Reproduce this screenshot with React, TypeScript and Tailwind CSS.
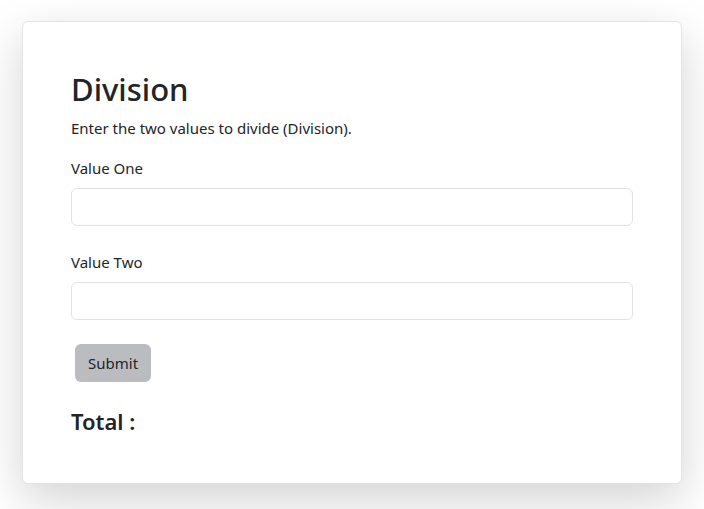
import React from "react";

export default function App() {
  return (
    <div className="min-h-[509px] bg-white pt-[21px] px-[22px]" style={{ fontFamily: '"Noto Sans", "Open Sans", sans-serif' }}>
      <div className="rounded-[6px] border border-[#e3e3e3] bg-white p-12 text-[#212529] shadow-[0_16px_48px_rgba(0,0,0,0.175)]">
        <h1 className="mb-2 text-[31px] font-medium leading-[38px]">Division</h1>
        <p className="mb-4 text-[15px] leading-6">Enter the two values to divide (Division).</p>
        <label className="mb-2 block text-[15px] leading-6">Value One</label>
        <input className="mb-6 block h-[38px] w-full rounded-[6px] border border-[#dee2e6] px-3 outline-none" />
        <label className="mb-2 block text-[15px] leading-6">Value Two</label>
        <input className="mb-6 block h-[38px] w-full rounded-[6px] border border-[#dee2e6] px-3 outline-none" />
        <button className="ml-1 h-[38px] rounded-[6px] bg-[#bbbcc0] px-[13px] text-[15px] text-[#212529]">Submit</button>
        <h4 className="mt-[26px] text-[22px] font-semibold leading-[27px]">Total :</h4>
      </div>
    </div>
  );
}
